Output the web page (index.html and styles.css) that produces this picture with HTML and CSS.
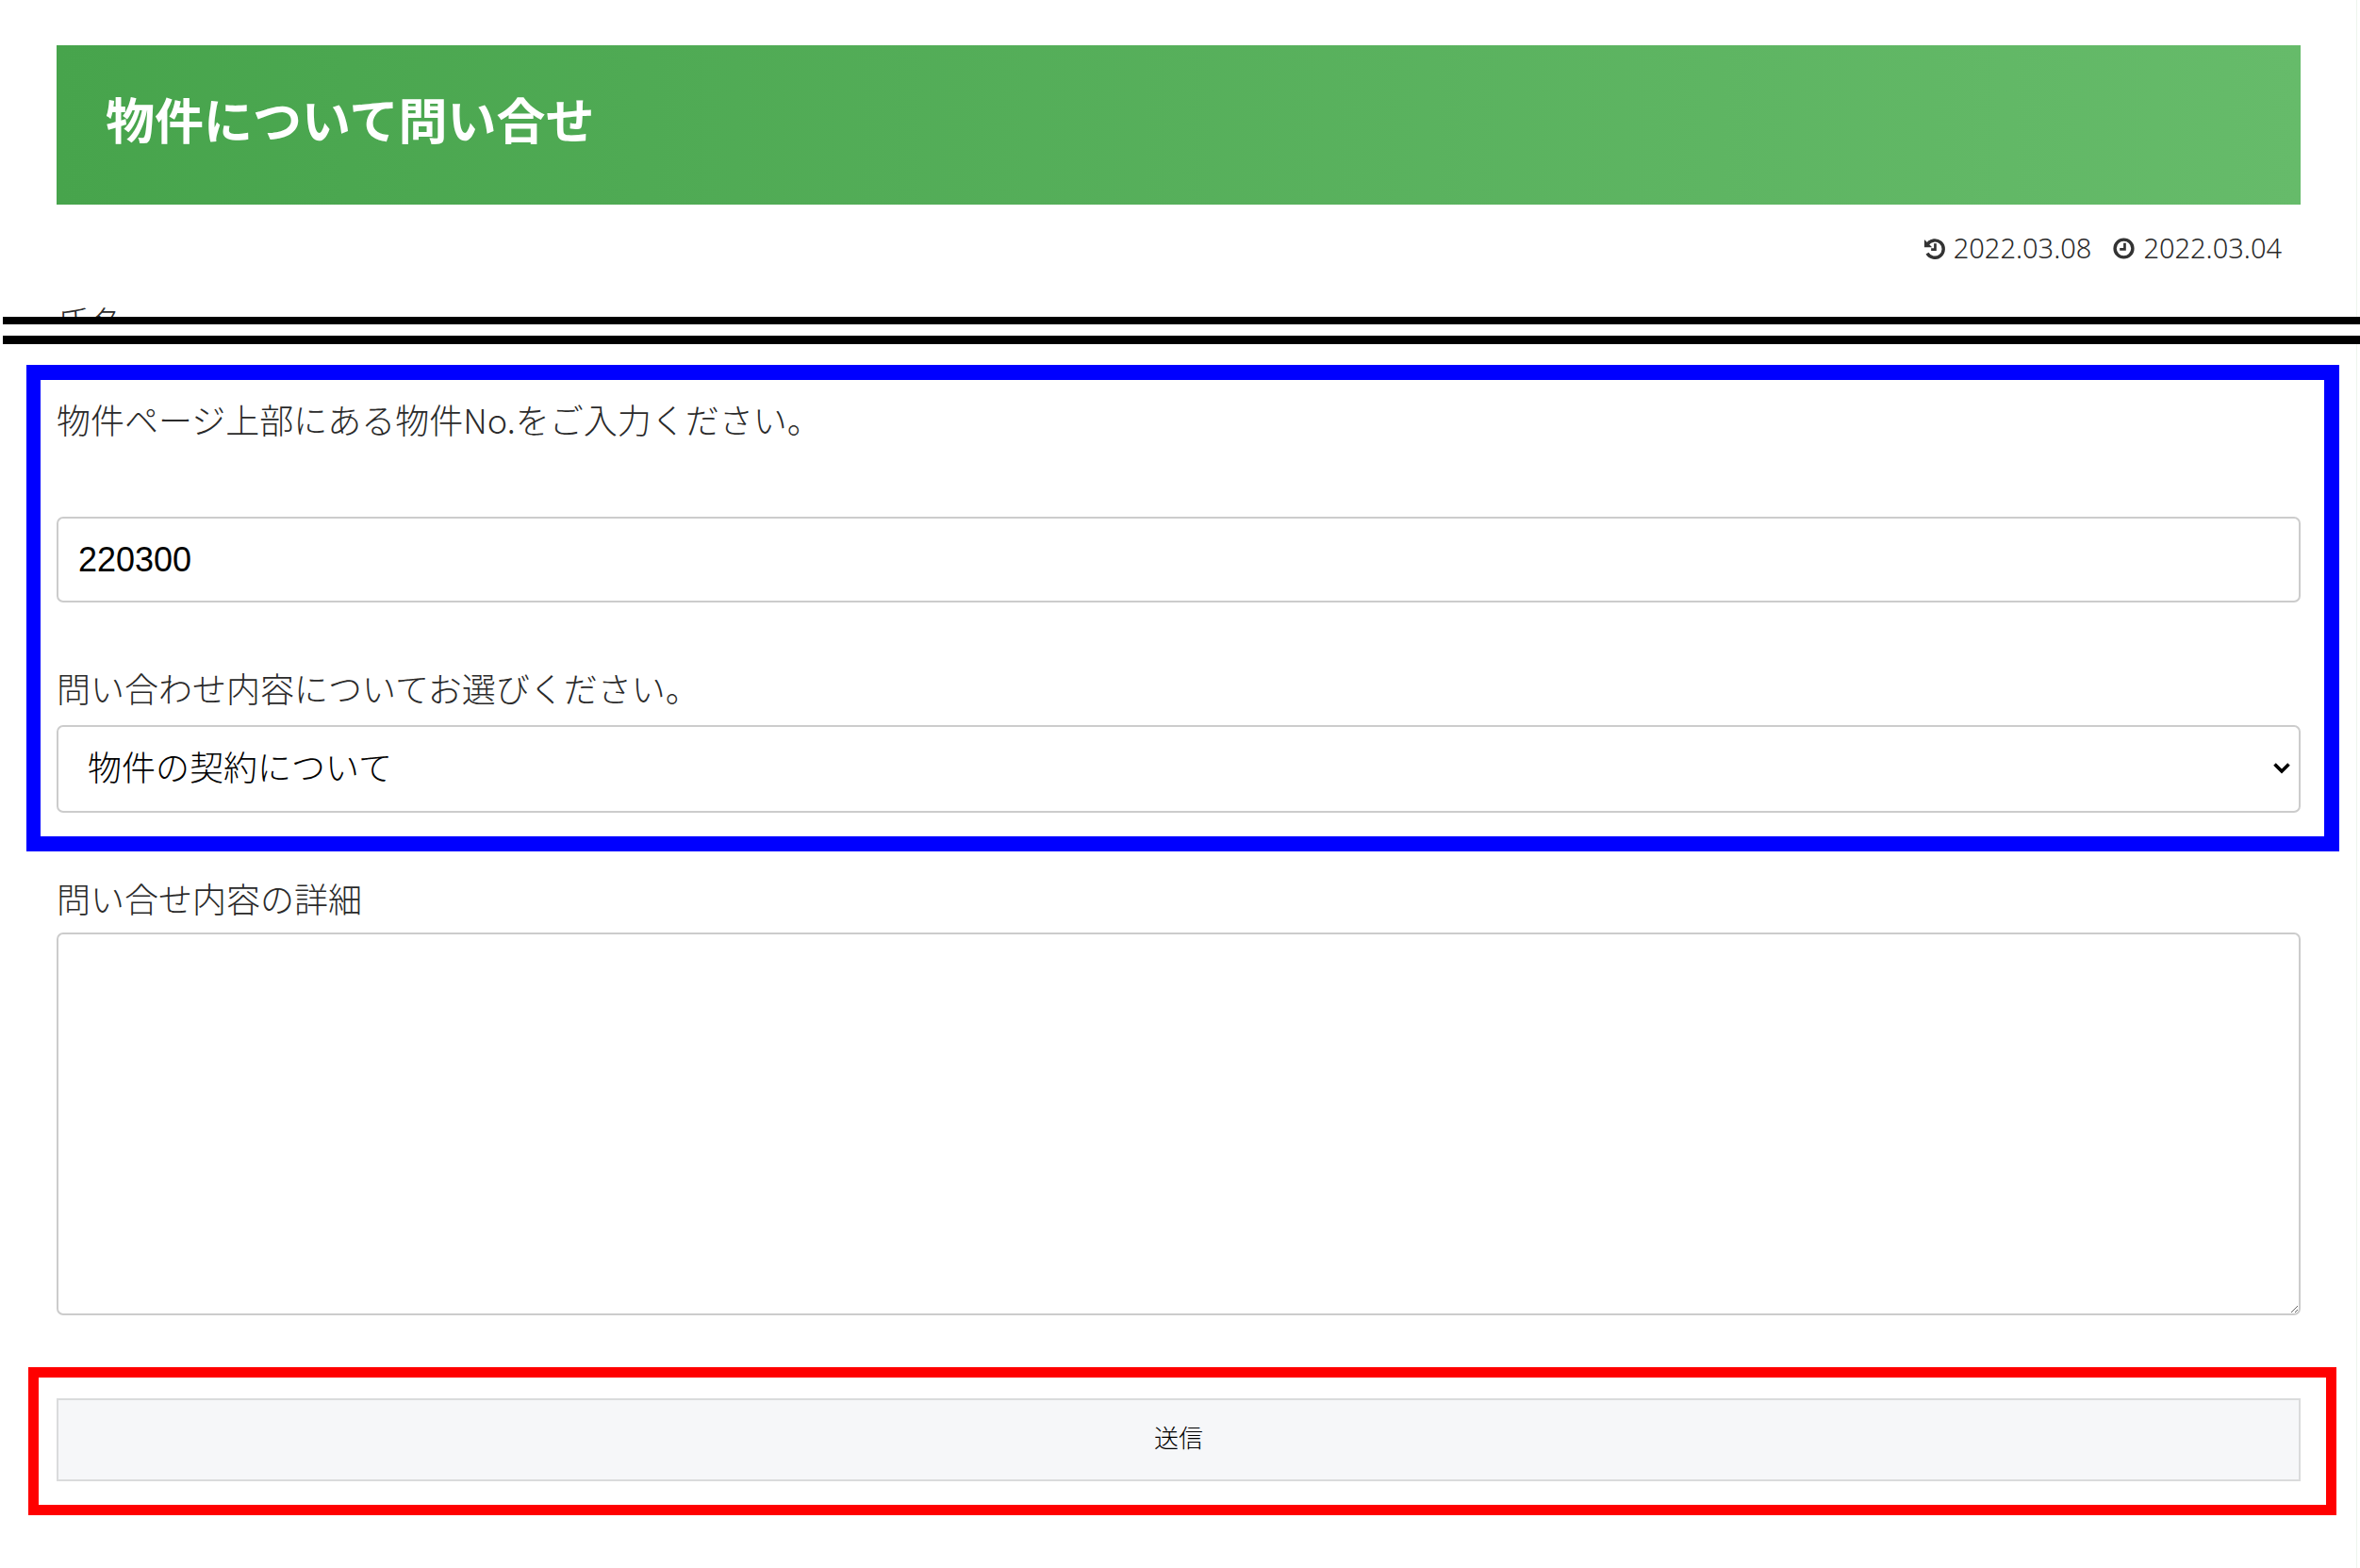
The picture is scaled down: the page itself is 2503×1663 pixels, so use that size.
FILE: index.html
```html
<!DOCTYPE html>
<html lang="ja">
<head>
<meta charset="utf-8">
<title>物件について問い合せ</title>
<link rel="stylesheet" href="styles.css">
</head>
<body>
<main class="page">
  <header class="banner"><h1 class="banner-title">物件について問い合せ</h1></header>
  <div class="meta">
    <span class="meta-item">
      <svg class="meta-icon" viewBox="0 0 24 24" aria-hidden="true">
        <path class="icon-line" d="M4.6 7.2A9.6 9.6 0 1 1 4.2 17.4"/>
        <path class="icon-fill" d="M1 2.2v8.6h8.6z"/>
        <path class="icon-hand" d="M13 6.5v6.6H8.5"/>
      </svg>2022.03.08</span>
    <span class="meta-item">
      <svg class="meta-icon" viewBox="0 0 24 24" aria-hidden="true">
        <circle class="icon-line" cx="12" cy="12" r="9.8"/>
        <path class="icon-hand" d="M13 6v7H7.5"/>
      </svg>2022.03.04</span>
  </div>
  <div class="clipped-field"><span class="label-text">氏名</span></div>
  <div class="page-break"></div>
  <section class="blue-frame">
    <label class="field-label first-label" for="no">物件ページ上部にある物件No.をご入力ください。</label>
    <input class="control text-input" id="no" type="text" value="220300">
    <label class="field-label second-label" for="kind">問い合わせ内容についてお選びください。</label>
    <div class="select-wrap">
      <select class="control select-input" id="kind">
        <option>物件の契約について</option>
      </select>
      <svg class="select-arrow" viewBox="0 0 18 13" aria-hidden="true"><path d="M1.5 2.5 9 10l7.5-7.5"/></svg>
    </div>
  </section>
  <section class="detail">
    <label class="field-label detail-label" for="body">問い合せ内容の詳細</label>
    <textarea class="control text-area" id="body"></textarea>
  </section>
  <section class="red-frame">
    <button class="submit" type="button">送信</button>
  </section>
</main>
</body>
</html>
```
FILE: styles.css
```css
* { box-sizing: border-box; }
html, body { margin: 0; height: 100%; background: #fff; }
body {
  overflow: hidden;
  color: #2a2a2a;
  font-family: "Noto Sans CJK JP", "Noto Sans", sans-serif;
  font-weight: 300;
}
body::after {
  content: "";
  position: fixed;
  top: 0;
  bottom: 0;
  left: 2499px;
  width: 1px;
  background: #eef5ee;
}
.page { display: flex; flex-direction: column; }
.banner {
  margin: 48px 63px 0 60px;
  height: 169px;
  padding: 0 52px;
  display: flex;
  align-items: flex-start;
  background: linear-gradient(to right, #47a44c, #66bb6a);
}
.banner-title {
  margin: 0;
  padding-top: 43px;
  font-size: 52px;
  line-height: 70px;
  font-weight: 700;
  color: #fff;
}
.meta {
  margin: 21px 83px 0 60px;
  height: 50px;
  display: flex;
  justify-content: flex-end;
  align-items: center;
  gap: 23px;
  font-family: "Noto Sans", sans-serif;
  font-size: 29px;
  line-height: 50px;
}
.meta-item { display: flex; align-items: center; gap: 9px; }
.meta-icon { width: 23px; height: 23px; display: block; }
.icon-line { fill: none; stroke: #333; stroke-width: 3.6; }
.icon-fill { fill: #333; }
.icon-hand { fill: none; stroke: #333; stroke-width: 2.8; }
.clipped-field {
  height: 48px;
  margin: 0 63px 0 60px;
  padding-top: 28px;
  overflow: hidden;
  font-size: 36px;
  line-height: 50px;
}
.label-text { display: block; }
.page-break {
  height: 29px;
  margin-left: 3px;
  border-top: 8px solid #000;
  border-bottom: 9px solid #000;
  background: #fff;
  position: relative;
  z-index: 1;
}
.blue-frame {
  display: flex;
  flex-direction: column;
  margin: 22px 22px 0 28px;
  padding: 17px 25px 25px 17px;
  border: 16px solid #00f;
  border-left-width: 15px;
}
.field-label {
  display: block;
  font-size: 36px;
  line-height: 50px;
  color: #2a2a2a;
}
.first-label { margin-bottom: 78px; padding-bottom: 2px; height: 50px; line-height: 48px; }
.second-label { margin: 67px 0 13px; height: 50px; line-height: 47px; }
.control {
  display: block;
  width: 100%;
  border: 2px solid #ccc;
  border-radius: 7px;
  background: #fff;
  color: #000;
  font-size: 36px;
}
.text-input {
  height: 91px;
  padding: 0 21px;
  font-family: "Liberation Sans", sans-serif;
}
.select-wrap { position: relative; }
.select-input {
  appearance: none;
  height: 93px;
  padding: 0 4px 7px 31px;
  font-family: "Noto Sans CJK JP", sans-serif;
  font-weight: 300;
}
.select-arrow {
  position: absolute;
  right: 11px;
  top: 39px;
  width: 18px;
  height: 13px;
  fill: none;
  stroke: #000;
  stroke-width: 3.6;
  pointer-events: none;
}
.detail {
  display: flex;
  flex-direction: column;
  margin: 26px 63px 0 60px;
}
.detail-label { margin-bottom: 10px; height: 50px; line-height: 47px; }
.text-area {
  height: 406px;
  resize: vertical;
  font-family: "Liberation Sans", sans-serif;
}
.red-frame {
  margin: 55px 25px 0 30px;
  padding: 22px 27px 25px 19px;
  border: 11px solid #f00;
}
.submit {
  display: block;
  width: 100%;
  height: 88px;
  padding: 0 0 7px;
  border: 2px solid #dadbdc;
  border-radius: 0;
  background: #f6f7f9;
  color: #000;
  font-family: "Noto Sans CJK JP", sans-serif;
  font-weight: 300;
  font-size: 26px;
}
```
